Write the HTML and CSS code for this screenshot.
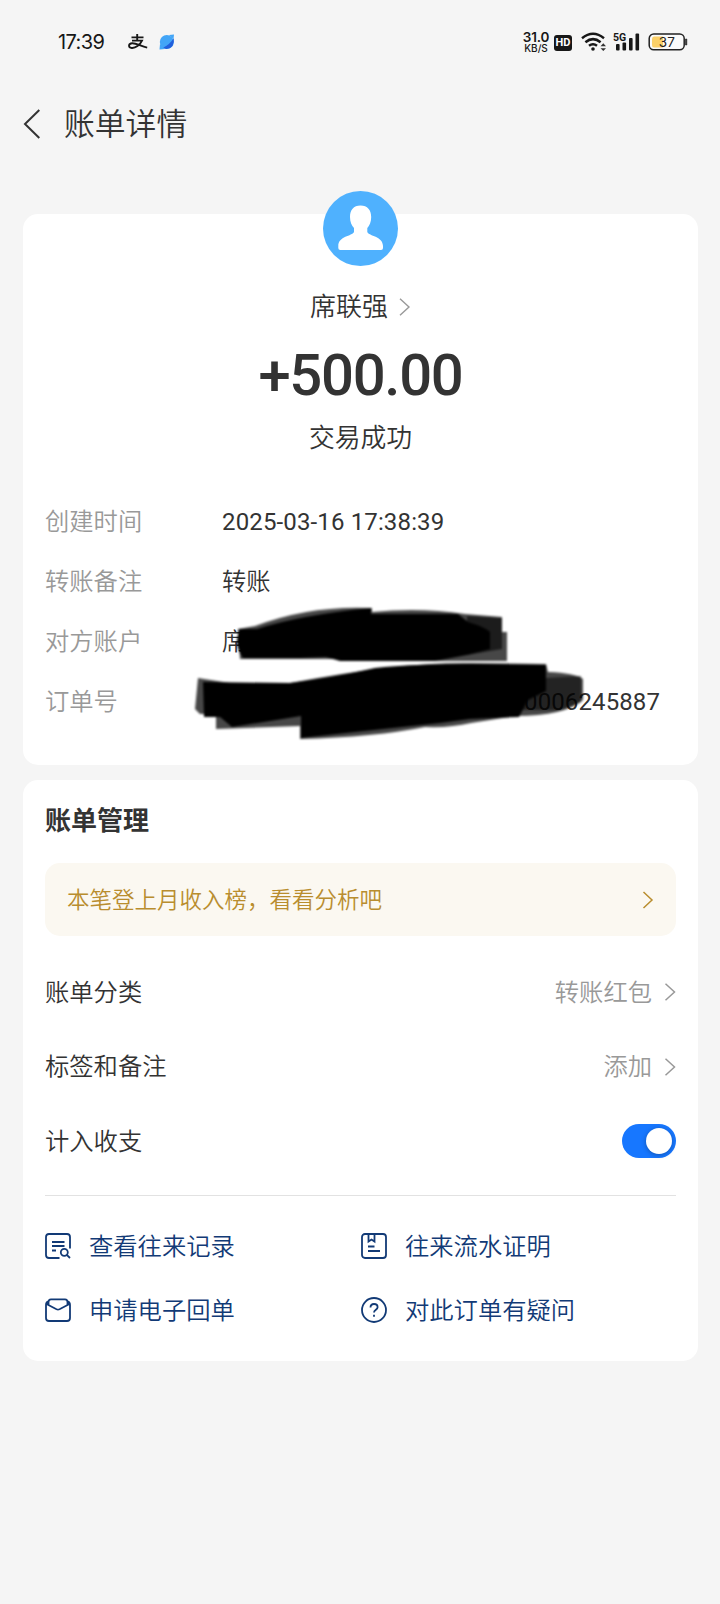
FILE: index.html
```html
<!DOCTYPE html>
<html lang="zh-CN">
<head>
<meta charset="utf-8">
<title>账单详情</title>
<link rel="stylesheet" href="styles.css">
</head>
<body>
<header class="status">
  <span class="clock">17:39</span>
  <svg class="st-pay" width="20" height="16" viewBox="0 0 20 16" fill="none" stroke="#171717" stroke-width="1.9"><path d="M3.5 3.4H15.5M9.2 0V6.4M4 6.6H14C12 11 7.5 14.3 3.8 14C0 13.5.2 9.4 4.2 9.2C8.5 9 13 12.5 19.2 13.6"/></svg>
  <svg class="st-app" width="16" height="16" viewBox="0 0 16 16"><circle cx="7.8" cy="8" r="7" fill="#42a5f7"/><path d="M14.8 4Q16 14 7.5 15L3.5 14Q11 10.5 14.8 4Z" fill="#225fdc"/><path d="M10 1L15 .5L14.5 5ZM1 10L.5 15.5L6 15Z" fill="#42a5f7"/></svg>
  <span class="grow"></span>
  <span class="speed"><b>31.0</b><i>KB/S</i></span>
  <span class="hd">HD</span>
  <svg class="st-wifi" width="26" height="20" viewBox="0 0 26 20" fill="none" stroke="#171717" stroke-width="2.5"><path d="M1 6.2Q12 -2.6 23 6.2M4.4 10.2Q12 4 19.6 10.2M8 13.8Q12 10.6 16 13.8"/><circle cx="12" cy="17" r="1.8" fill="#171717" stroke="none"/><path d="M19.5 14.2L22.3 11.3L25 14.2ZM19.5 16.2L22.3 19L25 16.2Z" fill="#333" stroke="none"/></svg>
  <svg class="st-cell" width="28" height="20" viewBox="0 0 28 20"><g fill="#171717"><rect x="3" y="12" width="3.6" height="6.5" rx="1"/><rect x="9.5" y="10.5" width="3.6" height="8" rx="1"/><rect x="16" y="6" width="3.6" height="12.5" rx="1"/><rect x="22.5" y="1.5" width="3.6" height="17" rx="1"/></g><text x="0" y="9" class="cell-text">5G</text></svg>
  <svg class="st-bat" width="40" height="18" viewBox="0 0 40 18"><rect x="1.2" y="1" width="35" height="15.8" rx="4.5" fill="#fff" fill-opacity=".5" stroke="#222" stroke-width="1.5"/><path d="M6 3.5H15V14.5H6Q4 14.5 4 12V6Q4 3.5 6 3.5Z" fill="#fbd068"/><path d="M37.5 6H38.8V12H37.5Z" fill="#222" stroke="#222" stroke-width=".6"/><text x="18.8" y="13.6" text-anchor="middle" class="bat-text">37</text></svg>
</header>

<nav class="nav">
  <svg width="18" height="30" viewBox="0 0 18 30" fill="none" stroke="#333" stroke-width="2"><path d="M16.3 1L2 15L16.3 29"/></svg>
  <h1>账单详情</h1>
</nav>

<main>
  <section class="card bill">
    <div class="avatar"><svg width="75" height="75" viewBox="0 0 75 75"><circle cx="37.5" cy="37.5" r="37.5" fill="#4fb1fe"/><path d="M37.5 14.5C44.5 14.5 48.2 19 48.2 26C48.2 31 46.5 34.5 44.3 37V41C46 45.3 59.8 45 60 55V57Q60 59 58 59H17.3Q15.3 59 15.3 57V55C15.3 45 29 45.3 31 41V37C28.7 34.5 27 31 27 26C27 19 30.5 14.5 37.5 14.5Z" fill="#fff"/></svg></div>
    <div class="payee"><span>席联强</span><svg width="12" height="18" viewBox="0 0 12 18" fill="none" stroke="#999" stroke-width="1.4"><path d="M1 .7L10 9L1 17.3"/></svg></div>
    <div class="amount">+500.00</div>
    <div class="state">交易成功</div>
    <dl class="facts">
      <dt>创建时间</dt><dd class="time">2025-03-16 17:38:39</dd>
      <dt>转账备注</dt><dd>转账</dd>
      <dt>对方账户</dt><dd>席</dd>
      <dt>订单号</dt><dd class="order">0006245887</dd>
    </dl>
    <svg class="ink" width="400" height="150" viewBox="190 600 400 150">
      <defs><filter id="soft"><feGaussianBlur stdDeviation="1.2"/></filter></defs>
      <g filter="url(#soft)">
        <g opacity=".72">
          <path d="M238 629L255 626Q310 605 372 608L372 612Q420 607 465 614L502 617V632H507V661H430L330 659L240 659Z"/>
          <path d="M198 678L230 683H290Q400 662 470 663L546 664L548 672Q575 673 583 679V700Q565 716 515 716L471 723Q450 728 425 727Q375 737 300 739V726L216 729V714H200L195 709Z"/>
        </g>
        <path d="M239 629H257Q300 615 371 608V614H458L468 622Q485 627 490 632V649L467 655L435 661H340L326 657L300 658H243Q237 650 237 640Z"/>
        <path d="M467 616L502 618V649L467 655Z" opacity=".6"/>
        <path d="M203 682L290 683Q330 678 375 668Q430 662 546 665V691L528 700L519 717L470 719L440 723L355 732L301 738V716L232 727L220 717H204Z"/>
        <path d="M546 678L581 676V702L560 710H515V690Z" opacity=".5"/>
      </g>
    </svg>
  </section>

  <section class="card manage">
    <h2>账单管理</h2>
    <a class="tip"><span>本笔登上月收入榜，看看分析吧</span><svg width="12" height="18" viewBox="0 0 12 18" fill="none" stroke="#b98d2e" stroke-width="1.5"><path d="M1.5 1L10 9L1.5 17"/></svg></a>
    <div class="row"><span class="label">账单分类</span><span class="value"><span class="label">转账红包</span><svg width="12" height="18" viewBox="0 0 12 18" fill="none" stroke="#999" stroke-width="1.5"><path d="M1.5 .7L10.5 9L1.5 17.3"/></svg></span></div>
    <div class="row"><span class="label">标签和备注</span><span class="value"><span class="label">添加</span><svg width="12" height="18" viewBox="0 0 12 18" fill="none" stroke="#999" stroke-width="1.5"><path d="M1.5 .7L10.5 9L1.5 17.3"/></svg></span></div>
    <div class="row"><span class="label">计入收支</span><span class="switch"></span></div>
    <div class="links">
      <a><svg width="26" height="26" viewBox="0 0 26 26"><path d="M14.5 25H4Q1 25 1 22V4Q1 1 4 1H22Q25 1 25 4V15.5M7 9H19.5M7 13H19.5M7 17.5H11"/><circle cx="19.3" cy="19.3" r="3.5"/><path d="M21.8 21.8L25 25"/></svg><span>查看往来记录</span></a>
      <a><svg width="26" height="26" viewBox="0 0 26 26"><rect x="1" y="1" width="24" height="24" rx="3"/><path d="M7.5 1V8.5L10.5 6.5L13.5 8.5V1M7 13.5H13.5M7 18H19"/></svg><span>往来流水证明</span></a>
      <a><svg width="26" height="26" viewBox="0 0 26 26"><path d="M3.5 7.5V5Q3.5 2.3 6 2.3H20Q22.5 2.3 22.5 5V7.5M3.5 4.5Q1 5 1 8V21Q1 24 4 24H22Q25 24 25 21V8Q25 5 22.5 4.5M1.5 7L11.5 12.3Q13 13 14.5 12.3L24.5 7"/></svg><span>申请电子回单</span></a>
      <a><svg width="26" height="26" viewBox="0 0 26 26"><circle cx="13" cy="13" r="12"/><path d="M9.5 10.6C9.5 8.2 11 7 13 7C15 7 16.6 8.2 16.6 10.2C16.6 12.7 13 12.8 13 15.6M13 17.8V19.8"/></svg><span>对此订单有疑问</span></a>
    </div>
  </section>
</main>
</body>
</html>
```

FILE: styles.css
```css
* { box-sizing: border-box; }
body { margin: 0; min-height: 1604px; background: #f5f5f5; color: #333; font-family: Roboto, "Noto Sans CJK SC", sans-serif; font-weight: 350; }
svg { display: block; flex: none; }
h1, h2, dl, dd { margin: 0; }

.status { height: 84px; padding: 0 32px 0 58px; display: flex; align-items: center; color: #171717; }
.clock { width: 70px; font: 400 20px/24px Inter, sans-serif; letter-spacing: -.6px; }
.st-app { margin-left: 11px; }
.grow { flex: 1; }
.speed { width: 28px; display: flex; flex-direction: column; align-items: center; font-family: Inter, sans-serif; }
.speed b { font-size: 13.5px; line-height: 12px; font-weight: 600; letter-spacing: -.2px; }
.speed i { font-size: 10px; line-height: 11px; font-style: normal; font-weight: 500; }
.hd { width: 18px; height: 16px; margin: 1px 0 0 4px; border-radius: 3px; background: #171717; color: #fff; font: 700 11px/16px Roboto, sans-serif; text-align: center; }
.st-wifi { margin-left: 9px; }
.st-cell { margin-left: 6px; }
.st-bat { margin-left: 7px; }
.cell-text { font: 700 10.5px Roboto, sans-serif; fill: #171717; }
.bat-text { font: 400 13.5px Inter, sans-serif; fill: #222; }

.nav { height: 80px; padding-left: 23px; display: flex; align-items: center; gap: 23px; }
.nav h1 { font-size: 30.8px; line-height: 40px; font-weight: 350; padding-top: 1px; }

main { padding: 50px 22px 0 23px; display: flex; flex-direction: column; gap: 15px; }
.card { position: relative; background: #fff; border-radius: 15px; padding: 0 22px; }
.bill { height: 551px; }
.avatar { display: flex; justify-content: center; margin-top: -23px; }
.payee { display: flex; align-items: center; justify-content: center; gap: 11px; height: 40px; margin-top: 20px; font-size: 26px; }
.payee span { padding-bottom: 3px; }
.payee svg { margin-top: 2px; }
.amount { height: 60px; margin-top: 19px; text-align: center; font-size: 58px; line-height: 60px; font-weight: 550; letter-spacing: -1.3px; }
.state { height: 40px; margin-top: 13px; text-align: center; font-size: 25.8px; line-height: 40px; }
.facts { display: grid; grid-template-columns: 177px 1fr; grid-auto-rows: 60px; align-items: center; margin-top: 34px; font-size: 24.3px; line-height: 30px; }
.facts dt { color: #999; }
.facts .time, .facts .order { font-size: 24px; font-weight: 400; }
.facts .time { letter-spacing: .14px; }
.facts .order { justify-self: end; padding-right: 16px; letter-spacing: .1px; }
.ink { position: absolute; left: 167px; top: 386px; }

.manage { height: 581px; }
.manage h2 { height: 83px; font-size: 26px; line-height: 82px; font-weight: 700; }
.tip { height: 73px; padding: 0 22px; display: flex; align-items: center; justify-content: space-between; border-radius: 15px; background: #fbf8f1; color: #b98d2e; font-size: 22.5px; }
.tip span { padding-bottom: 3px; }
.row { height: 74.5px; display: flex; align-items: center; justify-content: space-between; font-size: 24.3px; }
.row .label { padding-bottom: 4px; }
.tip + .row { margin-top: 19px; }
.value { display: flex; align-items: center; gap: 12px; color: #999; }
.switch { width: 54px; height: 34px; padding: 4px; display: flex; justify-content: flex-end; border-radius: 17px; background: #1777ff; }
.switch::before { content: ""; width: 26px; height: 26px; border-radius: 50%; background: #fff; box-shadow: 0 1px 5px rgba(0,0,0,.3); }
.links { display: grid; grid-template-columns: 316px 1fr; grid-auto-rows: 64px; margin-top: 16px; padding-top: 18px; border-top: 1px solid #e2e2e2; color: #123a76; font-size: 24.3px; }
.links a { display: flex; align-items: center; gap: 18px; }
.links span { padding-bottom: 3px; }
.links svg { fill: none; stroke: #123a76; stroke-width: 1.8; }
```
